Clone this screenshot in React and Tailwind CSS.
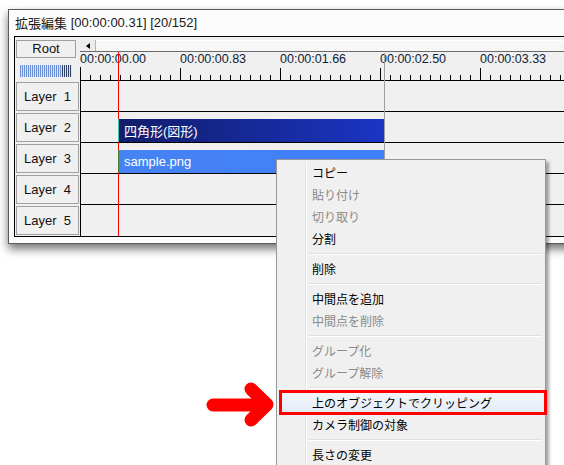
import React from "react";

const latin = { fontFamily: '"Liberation Sans", "Noto Sans CJK JP", sans-serif' };
const jp = { fontFamily: '"Noto Sans CJK JP", "Liberation Sans", sans-serif' };

const rulerLabels = ["00:00:00.00", "00:00:00.83", "00:00:01.66", "00:00:02.50", "00:00:03.33"];

const menuItems = [
    { label: "コピー" },
    { label: "貼り付け", disabled: true },
    { label: "切り取り", disabled: true },
    { label: "分割" },
    { sep: true },
    { label: "削除" },
    { sep: true },
    { label: "中間点を追加" },
    { label: "中間点を削除", disabled: true },
    { sep: true },
    { label: "グループ化", disabled: true },
    { label: "グループ解除", disabled: true },
    { sep: true },
    { label: "上のオブジェクトでクリッピング", active: true },
    { label: "カメラ制御の対象" },
    { sep: true },
    { label: "長さの変更" },
];

function Ticks() {
    const lines = [];
    for (let x = 10; x <= 520; x += 10) {
        const major = x % 100 === 0;
        lines.push(
            <line key={x} x1={x - 0.5} x2={x - 0.5} y1={major ? 1 : 8} y2={13} stroke="#000" strokeWidth="1" />
        );
    }
    return (
        <svg width="520" height="13" className="block">
            {lines}
        </svg>
    );
}

function Meter() {
    const stripes = Array.from({ length: 26 }, (_, i) => i);
    return (
        <div className="ml-[5px] mt-[7px] h-[12px] w-[52px] flex gap-[1px] bg-[#dde5f3]">
            {stripes.map((i) => (
                <span key={i} className={"w-[1px] h-full " + (i < 21 ? "bg-[#6b91d4]" : "bg-[#2f3f62]")} />
            ))}
        </div>
    );
}

function LayerRow({ n, last, children }) {
    return (
        <div className="flex h-[31px]">
            <div className="w-[65px] shrink-0">
                <div
                    className="ml-[1px] mt-[1px] h-[29px] w-[63px] border border-[#a0a0a0] flex items-center justify-center text-[13px] text-[#111] whitespace-pre"
                    style={latin}
                >
                    {"Layer  " + n}
                </div>
            </div>
            <div className={"flex-1 flex items-end border-l border-black " + (last ? "" : "border-b")}>
                {children}
            </div>
        </div>
    );
}

function Bar({ color, edge, children }) {
    return (
        <div
            className={"relative ml-[37px] w-[266px] h-[23px] pl-[5px] text-white text-[13px] leading-[23px] border-l " + color + " " + edge}
            style={latin}
        >
            {children}
        </div>
    );
}

function TimelineWindow() {
    return (
        <div className="w-[600px] border border-[#5a5a5a] bg-[#fcfcfc] shadow-[0_5px_9px_rgba(0,0,0,0.55)]">
            <div className="h-[26px] pl-[6px] flex items-center text-[13px] text-[#1a1a1a]" style={latin}>
                <span style={jp}>拡張編集</span>
                <span className="whitespace-pre"> [00:00:00.31] [20/152]</span>
            </div>
            <div className="relative mx-[5px] border-t border-l border-b border-black bg-[#f0f0f0] flex flex-col">
                {/* top: root button + scrollbar + ruler */}
                <div className="flex h-[44px]">
                    <div className="w-[65px] shrink-0 pt-[3px]">
                        <div className="ml-[1px] w-[60px] h-[18px] border border-[#a0a0a0] flex items-center justify-center text-[13px] text-[#111]" style={latin}>
                            Root
                        </div>
                        <Meter />
                    </div>
                    <div className="flex-1 pt-[3px] flex flex-col">
                        <div className="h-[12px] flex border-b border-[#6a6a6a]">
                            <div className="w-[16px] h-full border-r border-[#b5b5b5] bg-[#ececec] flex items-center justify-center">
                                <span className="block w-0 h-0 border-y-[3px] border-y-transparent border-r-[4px] border-r-black" />
                            </div>
                            <div className="flex-1 bg-[#f7f7f7] border-t border-white" />
                        </div>
                        <div className="h-[15px] flex text-[12.5px] leading-[15px] text-[#0f1c36]" style={latin}>
                            {rulerLabels.map((t) => (
                                <span key={t} className="w-[100px] shrink-0">{t}</span>
                            ))}
                        </div>
                        <div className="h-[14px] border-l border-b border-black">
                            <Ticks />
                        </div>
                    </div>
                </div>

                {/* playhead and scene end */}
                <div className="absolute left-[103px] top-[15px] bottom-0 w-[1px] bg-[#ff0000]" />
                <div className="absolute left-[369px] top-[16px] bottom-0 w-[1px] bg-[#a0a0a0]" />

                <LayerRow n={1} />
                <LayerRow n={2}>
                    <Bar color="bg-gradient-to-r from-[#111d6c] to-[#1b35c4]" edge="border-[#3cc8a8]">
                        <span style={latin}>四角形(<span style={jp}>図形</span>)</span>
                    </Bar>
                </LayerRow>
                <LayerRow n={3}>
                    <Bar color="bg-gradient-to-r from-[#4683f2] to-[#3f7ffc]" edge="border-[#4b7a2a]">
                        sample.png
                    </Bar>
                </LayerRow>
                <LayerRow n={4} />
                <LayerRow n={5} last />
            </div>
            <div className="h-[6px]" />
        </div>
    );
}

function ContextMenu() {
    return (
        <div className="absolute left-[276px] top-[159px] w-[270px] h-[330px] border border-[#979797] bg-[#f0f0f0] px-[2px] pt-[2px] shadow-[3px_3px_3px_rgba(0,0,0,0.35)]" style={jp}>
            <div className="absolute left-[28px] top-[2px] bottom-0 w-[2px] border-l border-[#e2e3e3] border-r border-r-white" />
            {menuItems.map((it, i) =>
                it.sep ? (
                    <div key={i} className="h-[8px] flex items-center">
                        <div className="ml-[30px] mr-[1px] flex-1 border-t border-[#e0e0e0] border-b border-b-white" />
                    </div>
                ) : (
                    <div
                        key={i}
                        className={
                            "relative h-[22px] pl-[33px] flex items-center text-[12px] " +
                            (it.disabled ? "text-[#8a8a8a] " : "text-black ") +
                            (it.active ? "bg-gradient-to-b from-[#f4f7fc] to-[#e3ebf6]" : "")
                        }
                    >
                        {it.label}
                        {it.active && (
                            <div className="absolute left-0 -top-[2px] w-[268px] h-[25px] border-[3px] border-[#ff0000]" />
                        )}
                    </div>
                )
            )}
        </div>
    );
}

function Arrow() {
    return (
        <svg className="absolute left-[200px] top-[378px]" width="80" height="55" viewBox="0 0 80 55">
            <g fill="none" stroke="#ff0000" strokeWidth="13" strokeLinecap="round" strokeLinejoin="round">
                <path d="M13 27 H62" />
                <path d="M51 11 L67 26.5 L51 42" />
            </g>
        </svg>
    );
}

export default function App() {
    return (
        <div className="relative w-[564px] h-[465px] overflow-hidden bg-white">
            <div className="pl-[8px] pt-[9px]">
                <TimelineWindow />
            </div>
            <ContextMenu />
            <Arrow />
        </div>
    );
}
